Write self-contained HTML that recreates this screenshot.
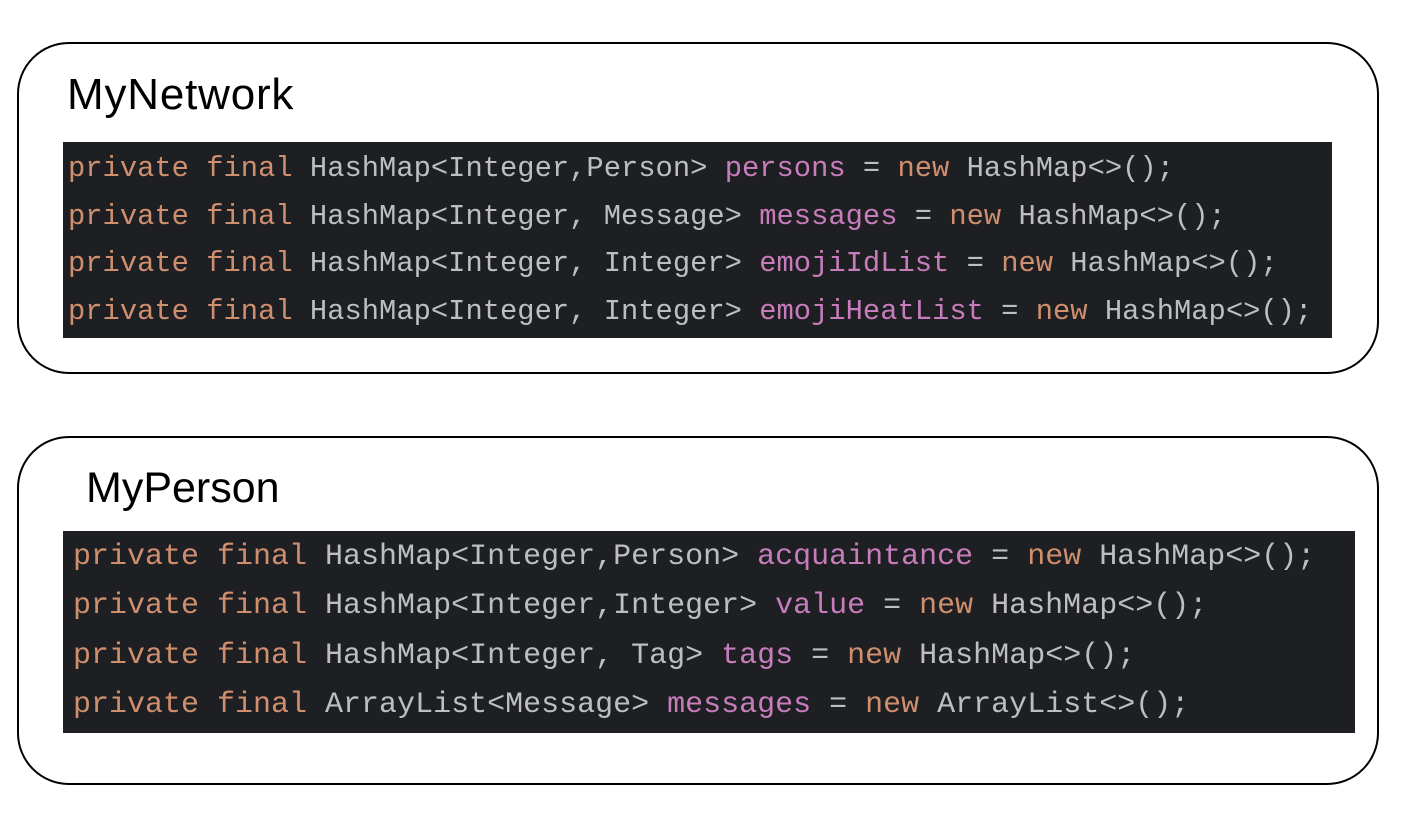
<!DOCTYPE html>
<html><head><style>
body{margin:0;width:1413px;height:815px;background:#fff;position:relative;overflow:hidden}
.box{position:absolute;border:2px solid #000;border-radius:52px;box-sizing:border-box}
.t{position:absolute;font-family:"Liberation Sans",sans-serif;color:#000;line-height:1}
.code{position:absolute;background:#1e1f22;font-family:"Liberation Mono",monospace;color:#bcbec4;white-space:pre;box-sizing:border-box}
.k{color:#cf8e6d}.f{color:#c77dbb}
</style></head><body>
<div class="box" style="left:17px;top:42px;width:1362px;height:332px"></div>
<div class="t" style="left:67px;top:73px;font-size:44px;letter-spacing:0.8px">MyNetwork</div>
<div class="code" style="left:63px;top:142px;width:1269px;height:196px;font-size:28.8px;line-height:47.5px;padding-left:5px;padding-top:3px"><span class="k">private final</span> HashMap&lt;Integer,Person&gt; <span class="f">persons</span> = <span class="k">new</span> HashMap&lt;&gt;();
<span class="k">private final</span> HashMap&lt;Integer, Message&gt; <span class="f">messages</span> = <span class="k">new</span> HashMap&lt;&gt;();
<span class="k">private final</span> HashMap&lt;Integer, Integer&gt; <span class="f">emojiIdList</span> = <span class="k">new</span> HashMap&lt;&gt;();
<span class="k">private final</span> HashMap&lt;Integer, Integer&gt; <span class="f">emojiHeatList</span> = <span class="k">new</span> HashMap&lt;&gt;();</div>
<div class="box" style="left:17px;top:436px;width:1362px;height:349px"></div>
<div class="t" style="left:86px;top:467px;font-size:43px">MyPerson</div>
<div class="code" style="left:63px;top:531px;width:1292px;height:202px;font-size:30px;line-height:49.4px;padding-left:10px;padding-top:2px"><span class="k">private final</span> HashMap&lt;Integer,Person&gt; <span class="f">acquaintance</span> = <span class="k">new</span> HashMap&lt;&gt;();
<span class="k">private final</span> HashMap&lt;Integer,Integer&gt; <span class="f">value</span> = <span class="k">new</span> HashMap&lt;&gt;();
<span class="k">private final</span> HashMap&lt;Integer, Tag&gt; <span class="f">tags</span> = <span class="k">new</span> HashMap&lt;&gt;();
<span class="k">private final</span> ArrayList&lt;Message&gt; <span class="f">messages</span> = <span class="k">new</span> ArrayList&lt;&gt;();</div>
</body></html>
